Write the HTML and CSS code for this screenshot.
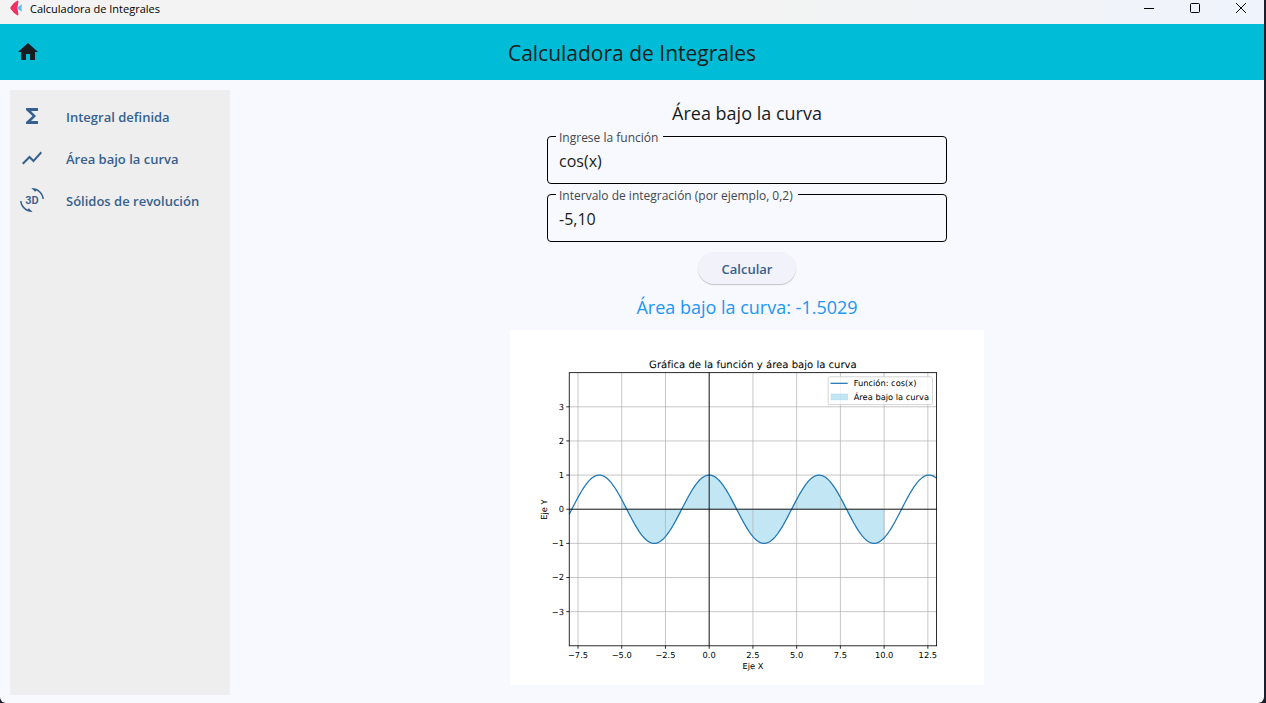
FILE: index.html
```html
<!DOCTYPE html>
<html lang="es">
<head>
<meta charset="utf-8">
<meta name="viewport" content="width=device-width, initial-scale=1">
<title>Calculadora de Integrales</title>
<link rel="stylesheet" href="styles.css">
</head>
<body>
<div class="window">
  <div class="titlebar">
    <svg class="logo" viewBox="0 0 12 16" aria-hidden="true">
      <path d="M7.6 .6Q8.6 .5 8.4 1.600 6.600 8 8.400 14.400 8.600 15.500 7.600 15.400 4 13.800.6 9 0 8 .6 7 4 2.200 7.600.6Z" fill="#ee3167"/>
      <path d="M12 4.400 9.600 5.800 7 8 9.600 10.200 12 11.600Q10.800 8 12 4.400Z" fill="#5cb8ea"/>
    </svg>
    <span class="caption">Calculadora de Integrales</span>
    <div class="controls">
      <button type="button" aria-label="Minimizar"><svg viewBox="0 0 10 10"><path d="M0 5.5H10"/></svg></button>
      <button type="button" aria-label="Maximizar"><svg viewBox="0 0 10 10"><rect x=".5" y=".5" width="9" height="9" rx="1"/></svg></button>
      <button type="button" aria-label="Cerrar"><svg viewBox="0 0 10 10"><path d="M0 0 10 10M10 0 0 10"/></svg></button>
    </div>
  </div>
  <header class="appbar">
    <button class="home" type="button" aria-label="Inicio"><svg class="icon" viewBox="0 0 24 24"><path d="M10 20v-6h4v6h5v-8h3L12 3 2 12h3v8z"/></svg></button>
    <h1>Calculadora de Integrales</h1>
  </header>
  <div class="body">
    <nav class="sidebar">
      <button type="button"><svg class="icon" viewBox="0 0 24 24"><path d="M18 4H6v2l6.500 6L6 18v2h12v-3h-7l5-5-5-5h7z"/></svg><span>Integral definida</span></button>
      <button type="button"><svg class="icon" viewBox="0 0 24 24"><path d="M3.500 18.490l6-6.010 4 4L22 6.920l-1.410-1.410-7.090 7.970-4-4L2 16.990z"/></svg><span>Área bajo la curva</span></button>
      <button type="button"><svg class="icon" viewBox="0 0 24 24" aria-hidden="true"><path d="M7.520 21.480C4.250 19.940 1.910 16.760 1.550 13H.05C.56 19.160 5.710 24 12 24l.66-.03-3.810-3.810zM16.480 2.520c3.270 1.550 5.610 4.720 5.970 8.480h1.500C23.440 4.840 18.290 0 12 0l-.66.03 3.810 3.810z"/><text class="badge3d" x="12" y="16">3D</text></svg><span>Sólidos de revolución</span></button>
    </nav>
    <main class="content">
      <h2>Área bajo la curva</h2>
      <div class="field">
        <label for="fn">Ingrese la función</label>
        <input id="fn" type="text" value="cos(x)">
      </div>
      <div class="field">
        <label for="interval">Intervalo de integración (por ejemplo, 0,2)</label>
        <input id="interval" type="text" value="-5,10">
      </div>
      <button class="calc" type="button">Calcular</button>
      <output class="result" for="fn interval">Área bajo la curva: -1.5029</output>
      <svg class="plot" id="plot" viewBox="0 0 800 599" role="img" aria-label="Gráfica de la función"></svg>
    </main>
  </div>
</div>
<script src="plot.js"></script>
</body>
</html>
```
FILE: styles.css
```css
* { box-sizing: border-box; }

body {
  margin: 0;
  background: #1c1f2b;
  color: #191c20;
  font-family: "Open Sans", "Noto Sans", sans-serif;
}

button {
  border: 0;
  background: none;
  color: inherit;
  font: inherit;
  padding: 0;
}

.window {
  display: flex;
  flex-direction: column;
  min-height: 100vh;
  margin-right: 2px;
  background: #f8f9ff;
  border-radius: 0 0 6px 6px;
  overflow: hidden;
}

.titlebar {
  display: flex;
  align-items: center;
  height: 24px;
  padding: 0 0 8px 10px;
  background: linear-gradient(90deg, #f3f3f3 60%, #eff3fb);
  color: #000;
}

.logo { width: 12px; height: 16px; }

.caption {
  margin-left: 8px;
  padding-top: 2px;
  font-size: 11px;
  line-height: 16px;
}

.controls { display: flex; margin-left: auto; }

.controls button {
  display: flex;
  align-items: center;
  justify-content: center;
  width: 46px;
  height: 16px;
}

.controls svg {
  width: 10px;
  height: 10px;
  fill: none;
  stroke: #000;
  overflow: visible;
}

.appbar {
  display: grid;
  grid-template-columns: 56px 1fr 56px;
  align-items: center;
  height: 56px;
  background: #00bcd7;
}

.home { display: flex; justify-content: center; }

.icon { width: 24px; height: 24px; fill: currentColor; }

h1, h2 { margin: 0; font-weight: 400; text-align: center; }

h1 { padding-top: 2px; font-size: 21px; line-height: 28px; }

h2 { font-size: 18px; line-height: 26px; }

.body {
  display: flex;
  flex: 1;
  gap: 10px;
  padding: 10px 10px 8px;
}

.sidebar {
  display: flex;
  flex-direction: column;
  gap: 10px;
  width: 220px;
  padding: 10px;
  background: #eee;
}

.sidebar button {
  display: flex;
  align-items: center;
  gap: 22px;
  height: 32px;
  color: #36618e;
  font-size: 13px;
  font-weight: 600;
}

.sidebar span { padding-top: 2px; }

.badge3d {
  font: 600 11px Roboto, sans-serif;
  text-anchor: middle;
}

.content {
  display: flex;
  flex: 1;
  flex-direction: column;
  align-items: center;
  gap: 10px;
  padding: 10px 0 0;
}

.field { position: relative; width: 400px; max-width: 100%; }

.field label {
  position: absolute;
  top: -6px;
  left: 9px;
  padding: 0 5px 0 3px;
  background: #f8f9ff;
  color: #42474e;
  font-size: 12px;
  line-height: 16px;
}

.field input {
  display: block;
  width: 100%;
  height: 48px;
  padding: 4px 11px 2px;
  border: 1px solid #000;
  border-radius: 4px;
  background: none;
  color: #191c20;
  font: 16px "Open Sans", "Noto Sans", sans-serif;
}

.calc {
  height: 32px;
  padding: 2px 24px 0;
  border-radius: 16px;
  background: #f2f3fa;
  box-shadow: 0 1px 1px #00000038;
  color: #36618e;
  font-size: 13px;
  font-weight: 600;
}

.result {
  color: #2196f3;
  font-size: 18px;
  line-height: 26px;
}

.plot {
  width: 474px;
  max-width: 100%;
  height: auto;
  background: #fff;
  font-family: "DejaVu Sans", sans-serif;
  font-size: 14px;
  text-rendering: geometricPrecision;
}

.plot text { fill: #000; }
.plot .title { font-size: 17px; }
.plot .middle { text-anchor: middle; }
.plot .end { text-anchor: end; }
.plot .grid { stroke: #b0b0b0; stroke-width: 1.200; }
.plot .axis { stroke: #000; stroke-width: 1.400; fill: none; }
.plot .curve { stroke: #1f77b4; stroke-width: 2.100; fill: none; }
.plot .area { fill: #87ceeb; fill-opacity: .5; stroke: #87ceeb; stroke-opacity: .5; }
.plot .legend { fill: #fff; fill-opacity: .8; stroke: #ccc; stroke-width: 1.400; }
```
FILE: plot.js
```js
const svg = document.getElementById('plot');
const box = { left: 100, right: 720, top: 72, bottom: 533 };
const X = v => box.left + (v + 8) / 21 * (box.right - box.left);
const Y = v => (box.top + box.bottom) / 2 - v * (box.bottom - box.top) / 8;

function add(tag, attrs, text) {
  const el = document.createElementNS('http://www.w3.org/2000/svg', tag);
  for (const k in attrs) el.setAttribute(k, attrs[k]);
  if (text) el.textContent = text;
  svg.appendChild(el);
}

function line(cls, x1, y1, x2, y2) {
  add('line', { class: cls, x1, y1, x2, y2 });
}

function curve(a, b) {
  const pts = [];
  for (let i = 0; i <= 400; i++) {
    const x = a + (b - a) * i / 400;
    pts.push(X(x).toFixed(2) + ' ' + Y(Math.cos(x)).toFixed(2));
  }
  return pts.join('L');
}

const label = (v, digits) => v.toFixed(digits).replace('-', '\u2212');

add('path', { class: 'area', d: `M${X(-5)} ${Y(0)}L${curve(-5, 10)}L${X(10)} ${Y(0)}Z` });

for (let x = -7.5; x <= 12.5; x += 2.5) {
  line('grid', X(x), box.top, X(x), box.bottom);
  line('axis', X(x), box.bottom, X(x), box.bottom + 5);
  add('text', { class: 'middle', x: X(x), y: box.bottom + 20 }, label(x, 1));
}
for (let y = -3; y <= 3; y++) {
  line('grid', box.left, Y(y), box.right, Y(y));
  line('axis', box.left - 5, Y(y), box.left, Y(y));
  add('text', { class: 'end', x: box.left - 9, y: Y(y) + 5 }, label(y, 0));
}

add('path', { class: 'curve', d: 'M' + curve(-8, 13) });
line('axis', box.left, Y(0), box.right, Y(0));
line('axis', X(0), box.top, X(0), box.bottom);
add('rect', { class: 'axis', x: box.left, y: box.top, width: 620, height: 461 });

add('text', { class: 'title middle', x: 410, y: 64 }, 'Gráfica de la función y área bajo la curva');
add('text', { class: 'middle', x: 410, y: 572 }, 'Eje X');
add('text', { class: 'middle', transform: 'translate(62 303) rotate(-90)' }, 'Eje Y');

add('rect', { class: 'legend', x: 537, y: 79, width: 176, height: 47, rx: 3 });
line('curve', 541, 90, 570, 90);
add('rect', { class: 'area', x: 542, y: 108, width: 28, height: 10 });
add('text', { x: 580, y: 95 }, 'Función: cos(x)');
add('text', { x: 580, y: 118 }, 'Área bajo la curva');
```
